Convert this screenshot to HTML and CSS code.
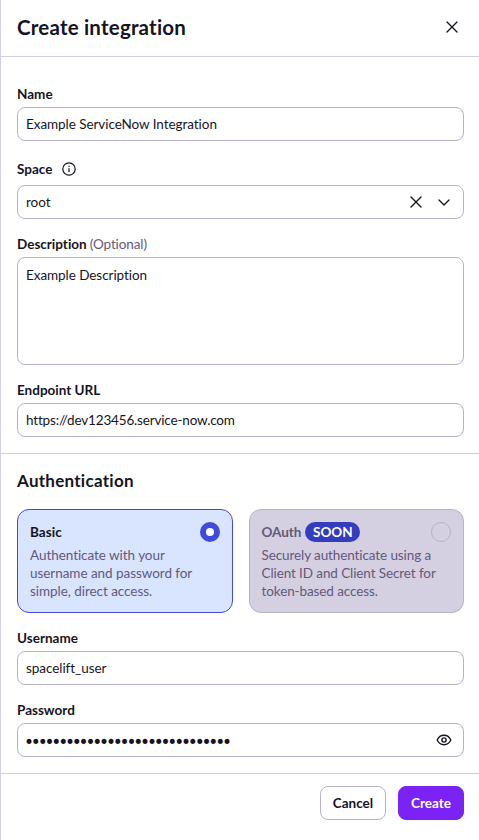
FILE: index.html
```html
<!DOCTYPE html>
<html lang="en">
<head>
<meta charset="utf-8">
<title>Create integration</title>
<link rel="stylesheet" href="styles.css">
</head>
<body>
<main class="drawer">
  <header class="header">
    <h1 class="title"><span>Create integration</span></h1>
    <svg class="icon" viewBox="0 0 20 20"><path d="M5 5l10 10M15 5L5 15"/></svg>
  </header>
  <section class="section details">
    <div class="field">
      <div class="label"><span>Name</span></div>
      <div class="input"><span>Example ServiceNow Integration</span></div>
    </div>
    <div class="field">
      <div class="label label-tall"><span>Space</span>
        <svg class="info" viewBox="0 0 14 14"><circle cx="7" cy="7" r="6.2"/><path d="M7 6.5v3.2M7 4.2v.4"/></svg>
      </div>
      <div class="input"><span>root</span>
        <div class="actions">
          <svg class="icon" viewBox="0 0 20 20"><path d="M5 5l10 10M15 5L5 15"/></svg>
          <svg class="icon" viewBox="0 0 20 20"><path d="M5 8l5 5 5-5"/></svg>
        </div>
      </div>
    </div>
    <div class="field">
      <div class="label"><span>Description</span><span class="optional">(Optional)</span></div>
      <div class="input textarea"><span>Example Description</span></div>
    </div>
    <div class="field">
      <div class="label"><span>Endpoint URL</span></div>
      <div class="input"><span class="url">https://dev123456.service-now.com</span></div>
    </div>
  </section>
  <section class="section auth">
    <h2 class="subtitle"><span>Authentication</span></h2>
    <div class="cards">
      <div class="card selected">
        <div class="card-head"><span>Basic</span><i class="radio"></i></div>
        <p class="card-text"><span>Authenticate with your</span><br><span>username and password for</span><br><span>simple, direct access.</span></p>
      </div>
      <div class="card disabled">
        <div class="card-head"><span>OAuth</span><span class="badge">SOON</span><i class="radio"></i></div>
        <p class="card-text"><span>Securely authenticate using a</span><br><span>Client ID and Client Secret for</span><br><span>token-based access.</span></p>
      </div>
    </div>
    <div class="field">
      <div class="label"><span>Username</span></div>
      <div class="input"><span>spacelift_user</span></div>
    </div>
    <div class="field">
      <div class="label"><span>Password</span></div>
      <div class="input"><span class="dots">••••••••••••••••••••••••••••••</span>
        <div class="actions"><svg class="eye" viewBox="0 0 16 16"><path d="M1.2 8C2.6 4.9 5 3.3 8 3.3S13.4 4.9 14.8 8C13.4 11.1 11 12.7 8 12.7S2.6 11.1 1.2 8z"/><circle cx="8" cy="8" r="2.1"/></svg></div>
      </div>
    </div>
  </section>
  <footer class="footer">
    <button class="btn">Cancel</button>
    <button class="btn primary">Create</button>
  </footer>
</main>
</body>
</html>
```
FILE: styles.css
```css
* { box-sizing: border-box; }
body {
  margin: 0;
  background: #fff;
  color: #16141f;
  font: 400 13.5px/18px Lato, "Noto Sans", sans-serif;
  font-variant-ligatures: none;
  letter-spacing: -0.06px;
}
h1, h2, p { margin: 0; }
svg { fill: none; stroke: #16141f; stroke-width: 1.4; stroke-linecap: round; stroke-linejoin: round; flex: none; }
.drawer { height: 840px; border-left: 1px solid #d4d0e4; overflow: hidden; }
.header {
  height: 57px;
  display: flex;
  align-items: center;
  justify-content: space-between;
  padding: 0 17px 2px 16px;
  border-bottom: 1px solid #d4d0e4;
}
.title { font-size: 20.5px; line-height: 28px; font-weight: 700; letter-spacing: 0.2px; }
.icon { width: 20px; height: 20px; }
.section {
  display: flex;
  flex-direction: column;
  gap: 16px;
  padding: 16px 15px 16px 16px;
  border-bottom: 1px solid #d4d0e4;
}
.details { padding-top: 28px; }
.field { display: flex; flex-direction: column; gap: 4px; }
.label { display: flex; align-items: center; height: 18px; gap: 4px; font-weight: 700; letter-spacing: 0; white-space: nowrap; }
.label-tall { height: 24px; gap: 10px; }
.info { width: 14px; height: 14px; stroke-width: 1.2; }
.optional { font-weight: 400; color: #63597a; letter-spacing: -0.1px; margin-left: -1px; }
.input {
  height: 34px;
  display: flex;
  align-items: center;
  justify-content: space-between;
  padding: 0 9px 0 8px;
  border: 1px solid #b8b3ca;
  border-radius: 8px;
  white-space: nowrap;
}
.textarea { height: 108px; align-items: flex-start; padding-top: 8px; }
.url { letter-spacing: -0.17px; }
.actions { display: flex; gap: 8px; }
.eye { width: 16px; height: 16px; margin-right: 2px; }
.dots { font: 17px/18px "DejaVu Sans", sans-serif; letter-spacing: -3.2px; margin-left: -2px; padding-top: 4px; }
.subtitle { font-size: 17px; line-height: 22px; font-weight: 700; letter-spacing: 0.27px; margin-bottom: 1px; }
.cards { display: grid; grid-template-columns: 216px 215px; gap: 16px; }
.card { height: 104px; border: 1px solid #b8b3ca; border-radius: 12px; padding: 12px; color: #63597a; }
.selected { background: #d9e4ff; border-color: #414bda; }
.disabled { background: #d4d0e1; padding-left: 11.5px; }
.card-head { height: 20px; display: flex; align-items: center; gap: 4px; font-weight: 700; }
.selected .card-head { color: #16141f; letter-spacing: 0.05px; }
.card-text { margin-top: 4px; white-space: nowrap; letter-spacing: -0.05px; }
.disabled .card-text { letter-spacing: -0.1px; }
.radio { width: 20px; height: 20px; margin-left: auto; border: 1px solid #b8b3ca; border-radius: 50%; }
.selected .radio { border: 6px solid #414bda; background: #fff; }
.badge { width: 55px; height: 20px; line-height: 20px; border-radius: 10px; background: #353dbf; color: #fff; text-align: center; }
.footer { display: flex; justify-content: flex-end; gap: 12px; padding: 12px 15px 0 0; }
.btn {
  width: 66px;
  height: 34px;
  padding: 0;
  border: 1px solid #b8b3ca;
  border-radius: 8px;
  background: #fff;
  color: #16141f;
  font: inherit;
  font-weight: 700;
}
.primary { border-color: #7b22f5; background: #7b22f5; color: #fff; }
```
